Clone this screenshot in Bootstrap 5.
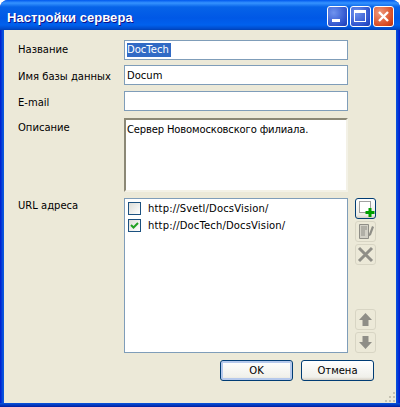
<!DOCTYPE html>
<html lang="ru">
<head>
  <meta charset="UTF-8">
  <title>Настройки сервера</title>
  <link href="https://cdn.jsdelivr.net/npm/bootstrap@5.3.0/dist/css/bootstrap.min.css" rel="stylesheet">
  <style>
    html, body { margin: 0; background: #fff; }
    body { width: 400px; height: 407px; overflow: hidden; font: 10px/13px "DejaVu Sans", sans-serif; color: #000; }
    .xp-window { width: 400px; height: 407px; border-radius: 8px 8px 0 0; padding: 0 4px 4px; background: linear-gradient(90deg, #0019cf 0, #0855dd 3px, #0855dd 396px, #0019cf 400px); position: relative; }
    .xp-window::after { content: ""; position: absolute; left: 0; right: 0; bottom: 0; height: 4px; background: linear-gradient(180deg, #0855dd, #001ea0); }
    .xp-title { height: 30px; margin: 0 -4px; padding: 3px 6px 0 7px; border-radius: 8px 8px 0 0; color: #fff; background: linear-gradient(180deg, #0058ee 0, #3593ff 3px, #0663e8 7px, #0058e6 18px, #0061ee 25px, #0049c8 29px, #0040b0 30px); }
    .xp-title-text { font: bold 13px/1 "Liberation Sans", sans-serif; letter-spacing: .05px; text-shadow: 1px 1px 0 #0f1089; margin-top: 1px; }
    .xp-ctls { column-gap: 2px; }
    .xp-ctl { width: 21px; height: 21px; border: 1px solid #fff; border-radius: 3px; background: radial-gradient(circle at 30% 30%, #6f93ee, #2a4fcb 75%, #1c3bb0); }
    .xp-ctl.xp-close { background: radial-gradient(circle at 30% 30%, #ef9a7e, #d94b22 70%, #b83010); }
    .xp-body { position: relative; height: 373px; background: #ece9d8; padding: 10px 0 0 14px; }
    .xp-lbl { width: 106px; flex: none; margin: 0; padding-top: 3px; }
    .xp-lbl-low { padding-top: 5px; }
    .xp-lbl-high { padding-top: 1px; }
    .xp-row1 { margin-bottom: 5px; }
    .xp-row2 { margin-bottom: 6px; }
    .xp-row3 { margin-bottom: 7px; }
    .xp-row4 { margin-bottom: 6px; }
    .xp-input { width: 224px; height: 20px; border: 1px solid #7f9db9; background: #fff; padding: 2px 2px 0; line-height: 14px; }
    .xp-row2 .xp-input { padding-top: 3px; }
    .xp-sel { background: #316ac5; color: #fff; display: inline-block; padding-right: 2px; }
    .xp-memo { width: 224px; height: 74px; background: #fff; border: 2px solid; border-color: #8b8876 #f3f1e6 #f3f1e6 #8b8876; padding: 3px 1px; line-height: 14px; letter-spacing: -.15px; }
    .xp-list { width: 224px; height: 155px; background: #fff; border: 1px solid #7f9db9; padding: 3px; row-gap: 4px; letter-spacing: .15px; }
    .xp-check { width: 13px; height: 13px; border: 1px solid #1c5180; background: linear-gradient(135deg, #dcdcd7, #fff); flex: none; }
    .xp-url { column-gap: 7px; }
    .xp-side { width: 28px; padding-left: 7px; }
    .xp-tools { row-gap: 2px; }
    .xp-tool { width: 21px; height: 21px; border: 1px solid #d8d5c4; border-radius: 3px; background: #ece9d8; padding: 0; display: flex; align-items: center; justify-content: center; }
    .xp-tool.xp-on { border-color: #003c74; background: linear-gradient(180deg, #fff, #ecebe5 85%, #d6d0c5); }
    .xp-footer { margin-top: 7px; padding-right: 22px; column-gap: 8px; }
    .xp-btn { height: 21px; width: 73px; border: 1px solid #003c74; border-radius: 3px; background: linear-gradient(180deg, #fff, #f0f0ea 85%, #d6d0c5); font: 10px/1 "DejaVu Sans", sans-serif; padding: 0; color: #000; }
    .xp-btn.xp-def { box-shadow: inset 0 0 0 2px #b6c9ec; }
    .xp-grip { position: absolute; right: 0; bottom: 0; }
  </style>
</head>
<body>
  <div class="xp-window d-flex flex-column">
    <div class="xp-title d-flex align-items-center justify-content-between">
      <span class="xp-title-text">Настройки сервера</span>
      <div class="xp-ctls d-flex">
        <div class="xp-ctl d-flex align-items-end ps-1 pb-1">
          <svg width="8" height="3"><rect width="8" height="3" fill="#fff"/></svg>
        </div>
        <div class="xp-ctl d-flex align-items-center justify-content-center">
          <svg width="13" height="13"><rect x=".5" y="1" width="11" height="10.500" fill="none" stroke="#fff"/><rect width="12" height="3" fill="#fff"/></svg>
        </div>
        <div class="xp-ctl xp-close d-flex align-items-center justify-content-center">
          <svg width="13" height="13"><path d="M2 2l9 9M11 2l-9 9" stroke="#fff" stroke-width="2.400"/></svg>
        </div>
      </div>
    </div>
    <div class="xp-body">
      <div class="xp-row1 d-flex"><label class="xp-lbl">Название</label><div class="xp-input"><span class="xp-sel">DocTech</span></div></div>
      <div class="xp-row2 d-flex"><label class="xp-lbl xp-lbl-low">Имя базы данных</label><div class="xp-input">Docum</div></div>
      <div class="xp-row3 d-flex"><label class="xp-lbl xp-lbl-low">E-mail</label><div class="xp-input"></div></div>
      <div class="xp-row4 d-flex"><label class="xp-lbl">Описание</label><div class="xp-memo">Сервер Новомосковского филиала.</div></div>
      <div class="d-flex">
        <label class="xp-lbl xp-lbl-high">URL адреса</label>
        <div class="xp-list d-flex flex-column">
          <div class="xp-url d-flex align-items-center"><span class="xp-check"></span><span>http://Svetl/DocsVision/</span></div>
          <div class="xp-url d-flex align-items-center"><span class="xp-check d-flex"><svg width="11" height="11"><path d="M2 5l2.500 2.500L9 3" fill="none" stroke="#21a121" stroke-width="2"/></svg></span><span>http://DocTech/DocsVision/</span></div>
        </div>
        <div class="xp-side d-flex flex-column justify-content-between">
          <div class="xp-tools d-flex flex-column">
            <button class="xp-tool xp-on"><svg width="19" height="19"><rect x="3.500" y="2.500" width="11" height="11" fill="#fff" stroke="#444" stroke-dasharray="1 1"/><path d="M14 9v9M9.500 13.500h9" stroke="#00a000" stroke-width="3"/></svg></button>
            <button class="xp-tool"><svg width="19" height="19"><path d="M3.500 2.500h9v14h-9z" fill="#d2d0c6" stroke="#8f8e87"/><path d="M5 5h6M5 7h6M5 9h4M5 11h4M5 13h4" stroke="#8f8e87"/><path d="M16 4l-3 8-1 3 3-2 3-8z" fill="#8f8e87"/></svg></button>
            <button class="xp-tool"><svg width="19" height="19"><path d="M3 3l13 13M16 3L3 16" stroke="#8f8e87" stroke-width="3"/></svg></button>
          </div>
          <div class="xp-tools d-flex flex-column">
            <button class="xp-tool"><svg width="15" height="15"><path d="M7.500 1L14 8h-3.500v6h-6V8H1z" fill="#8f8e87"/></svg></button>
            <button class="xp-tool"><svg width="15" height="15"><path d="M7.500 14L14 7h-3.500V1h-6v6H1z" fill="#8f8e87"/></svg></button>
          </div>
        </div>
      </div>
      <div class="xp-footer d-flex justify-content-end">
        <button class="xp-btn xp-def">OK</button>
        <button class="xp-btn">Отмена</button>
      </div>
      <svg class="xp-grip" width="12" height="12"><path d="M9 1h2v2H9zM5 5h2v2H5zM9 5h2v2H9zM1 9h2v2H1zM5 9h2v2H5zM9 9h2v2H9z" fill="#c5c2b2"/></svg>
    </div>
  </div>
</body>
</html>
